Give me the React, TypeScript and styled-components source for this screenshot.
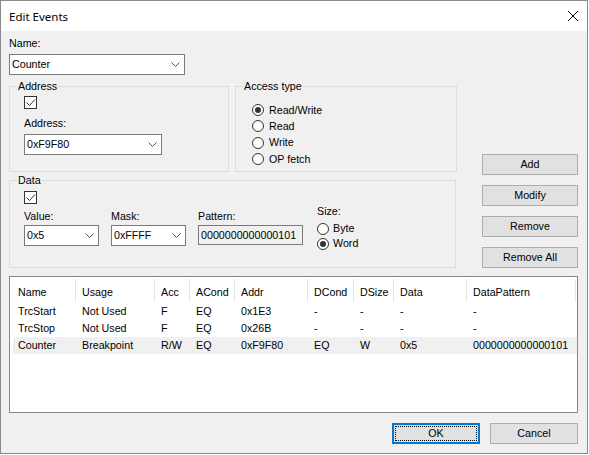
import styled, { createGlobalStyle } from "styled-components";

const GlobalStyle = createGlobalStyle`
  html, body {
    margin: 0;
    padding: 0;
    background: #ffffff;
  }
  body {
    font-family: "Liberation Sans", Arial, sans-serif;
    font-size: 10.7px;
    color: #000;
  }
`;

type Column = { title: string; width: number };

const columns: Column[] = [
  { title: "Name", width: 66 },
  { title: "Usage", width: 79 },
  { title: "Acc", width: 35 },
  { title: "ACond", width: 45 },
  { title: "Addr", width: 73 },
  { title: "DCond", width: 46 },
  { title: "DSize", width: 40 },
  { title: "Data", width: 73 },
  { title: "DataPattern", width: 109 },
];

const rows = [
  ["TrcStart", "Not Used", "F", "EQ", "0x1E3", "-", "-", "-", "-"],
  ["TrcStop", "Not Used", "F", "EQ", "0x26B", "-", "-", "-", "-"],
  ["Counter", "Breakpoint", "R/W", "EQ", "0xF9F80", "EQ", "W", "0x5", "0000000000000101"],
];

function Chevron() {
  return (
    <svg width="9" height="5" viewBox="0 0 9 5">
      <polyline points="0.5,0.5 4.5,4.5 8.5,0.5" fill="none" stroke="#505050" strokeWidth="1" />
    </svg>
  );
}

function Combo({ value, width }: { value: string; width: number }) {
  return (
    <ComboBox $w={width}>
      <ComboText>{value}</ComboText>
      <ComboArrow>
        <Chevron />
      </ComboArrow>
    </ComboBox>
  );
}

function Check() {
  return (
    <CheckBox>
      <svg width="11" height="11" viewBox="0 0 11 11">
        <polyline points="1.5,5.5 4.5,8.5 10,2.5" fill="none" stroke="#333" strokeWidth="1" />
      </svg>
    </CheckBox>
  );
}

function Radio({ label, checked }: { label: string; checked?: boolean }) {
  return (
    <RadioRow>
      <svg width="12" height="12" viewBox="0 0 12 12">
        <circle cx="6" cy="6" r="5.5" fill="#fff" stroke="#333" strokeWidth="1" />
        {checked && <circle cx="6" cy="6" r="3" fill="#333" />}
      </svg>
      <span>{label}</span>
    </RadioRow>
  );
}

export default function App() {
  return (
    <>
      <GlobalStyle />
      <Window>
        <TitleBar>
          <Title>Edit Events</Title>
          <svg width="10" height="10" viewBox="0 0 10 10">
            <line x1="0" y1="0" x2="10" y2="10" stroke="#000" strokeWidth="1" />
            <line x1="10" y1="0" x2="0" y2="10" stroke="#000" strokeWidth="1" />
          </svg>
        </TitleBar>
        <Body>
          <TopArea>
            <LeftColumn>
              <Label>Name:</Label>
              <Combo value="Counter" width={176} />
              <GroupRow>
                <Group $w={220} $h={92}>
                  <Legend>Address</Legend>
                  <GroupInner $pad="3px 0 0 14px">
                    <Check />
                    <Label $mt={8}>Address:</Label>
                    <Combo value="0xF9F80" width={138} />
                  </GroupInner>
                </Group>
                <Group $w={222} $h={92}>
                  <Legend>Access type</Legend>
                  <GroupInner $pad="9px 0 0 16px">
                    <Radio label="Read/Write" checked />
                    <Radio label="Read" />
                    <Radio label="Write" />
                    <Radio label="OP fetch" />
                  </GroupInner>
                </Group>
              </GroupRow>
              <Group $w={447} $h={94} $mt={2}>
                <Legend>Data</Legend>
                <GroupInner $pad="4px 0 0 14px">
                  <Check />
                  <DataRow>
                    <Field>
                      <Label $mb={2}>Value:</Label>
                      <Combo value="0x5" width={75} />
                    </Field>
                    <Field>
                      <Label $mb={2}>Mask:</Label>
                      <Combo value="0xFFFF" width={75} />
                    </Field>
                    <Field>
                      <Label $mb={2}>Pattern:</Label>
                      <ReadOnlyEdit>0000000000000101</ReadOnlyEdit>
                    </Field>
                    <SizeField>
                      <Label $mb={3}>Size:</Label>
                      <SmallRadio>
                        <Radio label="Byte" />
                      </SmallRadio>
                      <SmallRadio>
                        <Radio label="Word" checked />
                      </SmallRadio>
                    </SizeField>
                  </DataRow>
                </GroupInner>
              </Group>
            </LeftColumn>
            <ButtonColumn>
              <Button>Add</Button>
              <Button>Modify</Button>
              <Button>Remove</Button>
              <Button>Remove All</Button>
            </ButtonColumn>
          </TopArea>

          <ListView>
            <HeaderRow>
              {columns.map((c, i) => (
                <HeaderCell key={c.title} $w={c.width} $first={i === 0}>
                  {c.title}
                </HeaderCell>
              ))}
            </HeaderRow>
            {rows.map((r, ri) => (
              <Row key={ri} $selected={ri === 2}>
                {r.map((v, ci) => (
                  <Cell key={ci} $w={ci === 0 ? columns[ci].width - 3 : columns[ci].width} $first={ci === 0}>
                    {v}
                  </Cell>
                ))}
              </Row>
            ))}
          </ListView>

          <Footer>
            <Button $w={88} $default>
              OK
            </Button>
            <Button $w={88}>Cancel</Button>
          </Footer>
        </Body>
      </Window>
    </>
  );
}

const Window = styled.div`
  width: 588px;
  height: 454px;
  box-sizing: border-box;
  border: 1px solid #8a8a8a;
  background: #f0f0f0;
  display: flex;
  flex-direction: column;
`;

const TitleBar = styled.div`
  height: 30px;
  background: #ffffff;
  display: flex;
  align-items: center;
  justify-content: space-between;
  padding: 0 9px 0 8px;
`;

const Title = styled.span`
  font-family: "Noto Sans", "Open Sans", sans-serif;
  font-size: 11.5px;
  color: #000;
`;

const Body = styled.div`
  padding: 6px 9px 0 8px;
  display: flex;
  flex-direction: column;
`;

const TopArea = styled.div`
  display: flex;
  justify-content: space-between;
  align-items: stretch;
`;

const LeftColumn = styled.div`
  width: 447px;
  display: flex;
  flex-direction: column;
  align-items: flex-start;
`;

const Label = styled.div<{ $mt?: number; $mb?: number }>`
  line-height: 13px;
  height: 13px;
  margin-top: ${(p) => p.$mt ?? 0}px;
  margin-bottom: ${(p) => p.$mb ?? 4}px;
  white-space: nowrap;
`;

const ComboBox = styled.div<{ $w: number }>`
  width: ${(p) => p.$w}px;
  height: 21px;
  box-sizing: border-box;
  border: 1px solid #7a7a7a;
  background: #ffffff;
  display: flex;
  align-items: center;
  padding-left: 2px;
`;

const ComboText = styled.span`
  flex: 1;
  line-height: 13px;
  white-space: nowrap;
  overflow: hidden;
`;

const ComboArrow = styled.span`
  width: 17px;
  height: 100%;
  display: flex;
  align-items: center;
  justify-content: center;
`;

const GroupRow = styled.div`
  display: flex;
  gap: 6px;
  margin-top: 5px;
`;

const Group = styled.fieldset<{ $w: number; $h: number; $mt?: number }>`
  width: ${(p) => p.$w}px;
  height: ${(p) => p.$h}px;
  box-sizing: border-box;
  margin: ${(p) => p.$mt ?? 0}px 0 0 0;
  padding: 0;
  min-width: 0;
  border: 1px solid #dcdcdc;
`;

const Legend = styled.legend`
  padding: 0 1px;
  margin-left: 7px;
  line-height: 13px;
  height: 13px;
`;

const GroupInner = styled.div<{ $pad: string }>`
  padding: ${(p) => p.$pad};
  display: flex;
  flex-direction: column;
  align-items: flex-start;
`;

const CheckBox = styled.div`
  width: 13px;
  height: 13px;
  box-sizing: border-box;
  border: 1px solid #333333;
  background: #ffffff;
  display: flex;
  align-items: center;
  justify-content: center;
`;

const RadioRow = styled.div`
  height: 16.33px;
  display: flex;
  align-items: center;
  gap: 5px;
  line-height: 13px;
  white-space: nowrap;

  svg {
    flex: none;
  }
`;

const SmallRadio = styled.div`
  & > div {
    height: 15px;
    gap: 4px;
  }
`;

const DataRow = styled.div`
  display: flex;
  align-items: flex-start;
  gap: 12px;
  margin-top: 6px;
`;

const Field = styled.div`
  display: flex;
  flex-direction: column;
`;

const SizeField = styled.div`
  display: flex;
  flex-direction: column;
  margin-top: -5px;
  margin-left: 2px;
`;

const ReadOnlyEdit = styled.div`
  width: 105px;
  height: 20px;
  box-sizing: border-box;
  border: 1px solid #7a7a7a;
  background: #f0f0f0;
  padding-left: 2px;
  line-height: 18px;
  white-space: nowrap;
  overflow: hidden;
`;

const ButtonColumn = styled.div`
  width: 96px;
  display: flex;
  flex-direction: column;
  justify-content: flex-end;
  gap: 10px;
`;

const Button = styled.div<{ $w?: number; $default?: boolean }>`
  width: ${(p) => (p.$w ? `${p.$w}px` : "100%")};
  height: 21px;
  box-sizing: border-box;
  background: #e1e1e1;
  border: 1px solid ${(p) => (p.$default ? "#0078d7" : "#adadad")};
  box-shadow: ${(p) => (p.$default ? "inset 0 0 0 1px #0078d7" : "none")};
  outline: ${(p) => (p.$default ? "1px dotted #000" : "none")};
  outline-offset: -4px;
  display: flex;
  align-items: center;
  justify-content: center;
  line-height: 13px;
`;

const ListView = styled.div`
  margin-top: 8px;
  height: 137px;
  box-sizing: border-box;
  border: 1px solid #828790;
  background: #ffffff;
  display: flex;
  flex-direction: column;
`;

const HeaderRow = styled.div`
  display: flex;
  height: 26px;
`;

const HeaderCell = styled.div<{ $w: number; $first?: boolean }>`
  position: relative;
  width: ${(p) => p.$w}px;
  box-sizing: border-box;
  padding: 3px 0 0 ${(p) => (p.$first ? 8 : 6)}px;
  display: flex;
  align-items: center;
  white-space: nowrap;

  &::after {
    content: "";
    position: absolute;
    right: 0;
    top: 2px;
    bottom: 1px;
    width: 1px;
    background: #e5e5e5;
  }
`;

const Row = styled.div<{ $selected?: boolean }>`
  display: flex;
  height: 17px;
  margin-left: 3px;
  background: ${(p) => (p.$selected ? "#f0f0f0" : "transparent")};
`;

const Cell = styled.div<{ $w: number; $first?: boolean }>`
  width: ${(p) => p.$w}px;
  box-sizing: border-box;
  padding-left: ${(p) => (p.$first ? 5 : 6)}px;
  line-height: 17px;
  white-space: nowrap;
`;

const Footer = styled.div`
  display: flex;
  justify-content: flex-end;
  gap: 10px;
  margin-top: 10px;
`;
